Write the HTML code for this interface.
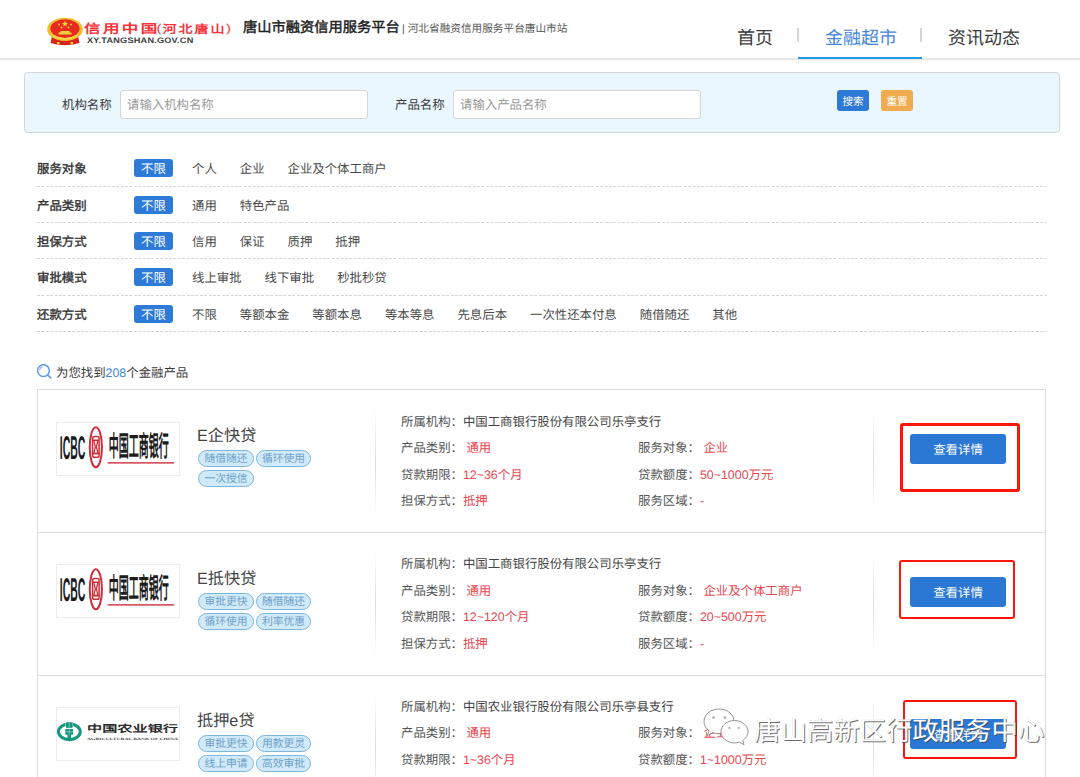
<!DOCTYPE html>
<html lang="zh-CN"><head><meta charset="utf-8">
<style>
*{margin:0;padding:0;box-sizing:border-box}
html,body{width:1080px;height:777px;overflow:hidden;background:#fff;font-family:"Liberation Sans",sans-serif;color:#333;text-rendering:geometricPrecision}
.a{position:absolute;white-space:nowrap}
#hdr{position:absolute;left:0;top:0;width:1080px;height:60px;border-bottom:2px solid #e6e6e6;background:#fff;box-shadow:0 1px 2px rgba(0,0,0,0.04)}
.nav{font-size:18px;color:#3a3a3a;line-height:20px}
.navsep{position:absolute;width:2px;height:14px;background:#d5d5d5}
#panel{position:absolute;left:24px;top:72px;width:1036px;height:61px;background:#eaf7fe;border:1px solid #d3d7da;border-radius:4px}
.lbl{font-size:12.4px;color:#3a3a3a;line-height:14px}
.inp{position:absolute;height:29px;background:#fff;border:1px solid #d6d6d6;border-radius:3px}
.ph{font-size:12.4px;color:#9a9a9a;line-height:14px}
.btn{position:absolute;height:21px;border-radius:3px;color:#fff;font-size:10.6px;font-weight:normal;text-align:center;line-height:25px}
.row{position:absolute;left:37px;width:1010px;height:1px;background:repeating-linear-gradient(90deg,#d6d6d6 0 3px,transparent 3px 4.4px)}
.flab{font-size:12.4px;font-weight:normal;color:#333;line-height:14px;-webkit-text-stroke:0.4px #333}
.badge{position:absolute;left:134px;width:39px;height:18px;background:#2d7ad7;border-radius:3px;color:#fff;font-size:12.4px;text-align:center;line-height:20px}
.opt{font-size:12.4px;color:#4a4a4a;line-height:14px}
.opt span{margin-left:23px}
#list{position:absolute;left:37px;top:389px;width:1009px;height:400px;border:1px solid #dcdcdc;border-bottom:none}
.logo{position:absolute;width:124px;height:54px;border:1px solid #ececec;background:#fff;overflow:hidden}
.logo svg{position:absolute;left:-1px;top:-1px}
.pname{position:absolute;font-size:16.2px;color:#444;line-height:18px;white-space:nowrap}
.tag{position:absolute;height:17px;width:56px;border:1px solid #7db6dc;background:#d0eafa;border-radius:9px;color:#6d9fc8;font-size:10.8px;line-height:16.5px;text-align:center;white-space:nowrap}
.vdiv{position:absolute;width:1px;background:linear-gradient(#fff,#e6e6e6 35%,#dcdcdc 50%,#e6e6e6 65%,#fff)}
.il{position:absolute;font-size:12.4px;color:#555;line-height:14px;white-space:nowrap}
.il b{font-weight:normal;color:#e8474f}
.dbtn{position:absolute;width:96px;height:30px;background:#2b78d4;border-radius:3px;color:#fff;font-size:12.4px;line-height:33px;text-align:center}
.redbox{position:absolute;border:2px solid #ff1608;border-radius:3px}
</style></head><body>

<div id="hdr">
  <svg class="a" style="left:46px;top:17px" width="38" height="29" viewBox="0 0 38 29">
    <path d="M6 19 Q19 26 32 19 L33.5 26 Q19 30.5 4.5 26Z" fill="#d8241b"/>
    <ellipse cx="19" cy="12.3" rx="17.8" ry="11.6" fill="#f2be30"/>
    <ellipse cx="19" cy="11.6" rx="14.6" ry="9.4" fill="#e52a20"/>
    <path d="M6.5 18.5 Q19 25.5 31.5 18.5" stroke="#f6d54a" stroke-width="2" fill="none"/>
    <path d="M12.5 17.5 h13 v-2 h-2 v-1.5 h-9 v1.5 h-2z" fill="#f5d23a"/>
    <path d="M19 3.6 l0.9 2.1 2.2 .2 -1.7 1.4 .5 2.2 -1.9-1.2 -1.9 1.2 .5-2.2 -1.7-1.4 2.2-.2z" fill="#f5d23a"/>
    <circle cx="13" cy="7.5" r="0.9" fill="#f5d23a"/><circle cx="25" cy="7.5" r="0.9" fill="#f5d23a"/>
    <circle cx="15.5" cy="10.5" r="0.9" fill="#f5d23a"/><circle cx="22.5" cy="10.5" r="0.9" fill="#f5d23a"/>
    <rect x="11" y="25" width="2.5" height="2.5" fill="#f5d23a"/><rect x="24.5" y="25" width="2.5" height="2.5" fill="#f5d23a"/>
  </svg>
  <div class="a" style="left:84px;top:22px;font-size:16.5px;line-height:18px;font-weight:bold;color:#f5343c;letter-spacing:2.4px;transform:scaleY(0.75);transform-origin:0 0">信用中国</div>
  <div class="a" style="left:156.5px;top:22px;font-size:15px;line-height:18px;font-weight:normal;color:#f5343c;transform:scaleY(0.76);transform-origin:0 0">(</div>
  <div class="a" style="left:162.5px;top:21.5px;font-size:14px;line-height:18px;font-weight:bold;color:#f5343c;letter-spacing:2px;transform:scaleY(0.8);transform-origin:0 0">河北唐山</div>
  <div class="a" style="left:226px;top:22px;font-size:15px;line-height:18px;font-weight:normal;color:#f5343c;transform:scaleY(0.76);transform-origin:0 0">)</div>
  <div class="a" style="left:87px;top:35.5px;font-size:8px;line-height:9px;font-weight:bold;color:#3a3a3a;letter-spacing:0.2px;transform:scaleX(1.14);transform-origin:0 0">XY.TANGSHAN.GOV.CN</div>
  <div class="a" style="left:243px;top:19.5px;font-size:14.25px;line-height:17px;font-weight:normal;color:#222;-webkit-text-stroke:0.45px #222">唐山市融资信用服务平台</div>
  <div class="a" style="left:402px;top:23px;font-size:10.65px;line-height:13px;color:#555">| 河北省融资信用服务平台唐山市站</div>

  <div class="a nav" style="left:737px;top:28px">首页</div>
  <div class="navsep" style="left:797px;top:28px"></div>
  <div class="a nav" style="left:825px;top:28px;color:#4585db">金融超市</div>
  <div class="a" style="left:798px;top:56.5px;width:124px;height:2px;background:#259be9"></div>
  <div class="navsep" style="left:920px;top:28px"></div>
  <div class="a nav" style="left:948px;top:28px">资讯动态</div>
</div>

<div id="panel"></div>
<div class="a lbl" style="left:62px;top:98px">机构名称</div>
<div class="inp" style="left:120px;top:90px;width:248px"></div>
<div class="a ph" style="left:127px;top:98px">请输入机构名称</div>
<div class="a lbl" style="left:395px;top:98px">产品名称</div>
<div class="inp" style="left:453px;top:90px;width:248px"></div>
<div class="a ph" style="left:460px;top:98px">请输入产品名称</div>
<div class="btn" style="left:837px;top:90px;width:32px;background:#2e78d6">搜索</div>
<div class="btn" style="left:881px;top:90px;width:32px;background:#f0ab4e">重置</div>

<div class="a flab" style="left:37px;top:162px">服务对象</div>
<div class="badge" style="top:159px">不限</div>
<div class="a opt" style="left:192px;top:162px">个人<span>企业</span><span>企业及个体工商户</span></div>
<div class="row" style="top:186px"></div>
<div class="a flab" style="left:37px;top:199px">产品类别</div>
<div class="badge" style="top:196px">不限</div>
<div class="a opt" style="left:192px;top:199px">通用<span>特色产品</span></div>
<div class="row" style="top:222px"></div>
<div class="a flab" style="left:37px;top:235px">担保方式</div>
<div class="badge" style="top:232px">不限</div>
<div class="a opt" style="left:192px;top:235px">信用<span>保证</span><span>质押</span><span>抵押</span></div>
<div class="row" style="top:258px"></div>
<div class="a flab" style="left:37px;top:271px">审批模式</div>
<div class="badge" style="top:268px">不限</div>
<div class="a opt" style="left:192px;top:271px">线上审批<span>线下审批</span><span>秒批秒贷</span></div>
<div class="row" style="top:295px"></div>
<div class="a flab" style="left:37px;top:307.5px">还款方式</div>
<div class="badge" style="top:304.5px">不限</div>
<div class="a opt" style="left:192px;top:307.5px">不限<span>等额本金</span><span>等额本息</span><span>等本等息</span><span>先息后本</span><span>一次性还本付息</span><span>随借随还</span><span>其他</span></div>
<div class="row" style="top:331px"></div>
<svg class="a" style="left:32px;top:358px" width="30" height="26" viewBox="0 0 30 26">
  <circle cx="11.5" cy="12.6" r="5.9" stroke="#5d9be6" stroke-width="1.5" fill="none"/>
  <path d="M7.6 12.2 A4 4 0 0 1 10.6 8.9" stroke="#8bb9ee" stroke-width="1.1" fill="none"/>
  <path d="M15.9 17.1 L18.8 20" stroke="#5d9be6" stroke-width="1.7" stroke-linecap="round"/>
</svg>
<div class="a lbl" style="left:56px;top:366px">为您找到<span style="color:#3d84d8">208</span>个金融产品</div>
<div id="list"></div>
<div class="logo" style="left:56px;top:421.5px"><svg width="124" height="54" viewBox="0 0 124 54">
  <text x="3.8" y="36.5" font-family="Liberation Sans" font-weight="bold" font-size="33" fill="#1c1c1c" textLength="25.5" lengthAdjust="spacingAndGlyphs">ICBC</text>
  <ellipse cx="39.85" cy="25.2" rx="6.1" ry="20" fill="none" stroke="#d02c3a" stroke-width="2"/>
  <rect x="36.6" y="14.6" width="6.5" height="20.6" rx="1.8" fill="none" stroke="#d02c3a" stroke-width="1.5"/>
  <path d="M36.8 18.2 h6.1 M36.8 31.6 h6.1" stroke="#d02c3a" stroke-width="1.6" fill="none"/>
  <path d="M38 18.2 C38 22 39.3 23.2 39.3 24.9 C39.3 26.6 38 27.8 38 31.6 M41.7 18.2 C41.7 22 40.4 23.2 40.4 24.9 C40.4 26.6 41.7 27.8 41.7 31.6" stroke="#d02c3a" stroke-width="1.3" fill="none"/>
  <g transform="translate(52.7,34.3) scale(1,2.0)"><text x="0" y="0" font-weight="bold" font-size="14" fill="#1c1c1c" textLength="60" lengthAdjust="spacingAndGlyphs">中国工商银行</text></g>
  <rect x="51.6" y="40" width="66.5" height="1.7" fill="#d5565e"/>
</svg></div>
<div class="pname" style="left:197px;top:427.0px">E企快贷</div>
<div class="tag" style="left:198px;top:450.3px;width:56px">随借随还</div>
<div class="tag" style="left:256px;top:450.3px;width:55px">循环使用</div>
<div class="tag" style="left:198px;top:470.1px;width:56px">一次授信</div>
<div class="vdiv" style="left:375px;top:408.5px;height:106px"></div>
<div class="vdiv" style="left:873px;top:408.5px;height:104px"></div>
<div class="il" style="left:401px;top:414.5px">所属机构：<span style="color:#444">中国工商银行股份有限公司乐亭支行</span></div>
<div class="il" style="left:401px;top:441.1px">产品类别： <b>通用</b></div>
<div class="il" style="left:638px;top:441.1px">服务对象： <b>企业</b></div>
<div class="il" style="left:401px;top:467.7px">贷款期限：<b>12~36个月</b></div>
<div class="il" style="left:638px;top:467.7px">贷款额度：<b>50~1000万元</b></div>
<div class="il" style="left:401px;top:494.3px">担保方式：<b>抵押</b></div>
<div class="il" style="left:638px;top:494.3px">服务区域：<b>-</b></div>
<div class="dbtn" style="left:910px;top:434.3px">查看详情</div>
<div class="redbox" style="left:900px;top:423.0px;width:120.2px;height:68.7px;border-width:3px"></div>
<div class="a" style="left:38px;top:532.0px;width:1008px;height:1px;background:#dcdcdc"></div>
<div class="logo" style="left:56px;top:564.0px"><svg width="124" height="54" viewBox="0 0 124 54">
  <text x="3.8" y="36.5" font-family="Liberation Sans" font-weight="bold" font-size="33" fill="#1c1c1c" textLength="25.5" lengthAdjust="spacingAndGlyphs">ICBC</text>
  <ellipse cx="39.85" cy="25.2" rx="6.1" ry="20" fill="none" stroke="#d02c3a" stroke-width="2"/>
  <rect x="36.6" y="14.6" width="6.5" height="20.6" rx="1.8" fill="none" stroke="#d02c3a" stroke-width="1.5"/>
  <path d="M36.8 18.2 h6.1 M36.8 31.6 h6.1" stroke="#d02c3a" stroke-width="1.6" fill="none"/>
  <path d="M38 18.2 C38 22 39.3 23.2 39.3 24.9 C39.3 26.6 38 27.8 38 31.6 M41.7 18.2 C41.7 22 40.4 23.2 40.4 24.9 C40.4 26.6 41.7 27.8 41.7 31.6" stroke="#d02c3a" stroke-width="1.3" fill="none"/>
  <g transform="translate(52.7,34.3) scale(1,2.0)"><text x="0" y="0" font-weight="bold" font-size="14" fill="#1c1c1c" textLength="60" lengthAdjust="spacingAndGlyphs">中国工商银行</text></g>
  <rect x="51.6" y="40" width="66.5" height="1.7" fill="#d5565e"/>
</svg></div>
<div class="pname" style="left:197px;top:569.5px">E抵快贷</div>
<div class="tag" style="left:198px;top:592.8px;width:56px">审批更快</div>
<div class="tag" style="left:256px;top:592.8px;width:55px">随借随还</div>
<div class="tag" style="left:198px;top:612.6px;width:56px">循环使用</div>
<div class="tag" style="left:256px;top:612.6px;width:55px">利率优惠</div>
<div class="vdiv" style="left:375px;top:551.0px;height:106px"></div>
<div class="vdiv" style="left:873px;top:551.0px;height:104px"></div>
<div class="il" style="left:401px;top:557.0px">所属机构：<span style="color:#444">中国工商银行股份有限公司乐亭支行</span></div>
<div class="il" style="left:401px;top:583.6px">产品类别： <b>通用</b></div>
<div class="il" style="left:638px;top:583.6px">服务对象： <b>企业及个体工商户</b></div>
<div class="il" style="left:401px;top:610.2px">贷款期限：<b>12~120个月</b></div>
<div class="il" style="left:638px;top:610.2px">贷款额度：<b>20~500万元</b></div>
<div class="il" style="left:401px;top:636.8px">担保方式：<b>抵押</b></div>
<div class="il" style="left:638px;top:636.8px">服务区域：<b>-</b></div>
<div class="dbtn" style="left:910px;top:576.8px">查看详情</div>
<div class="redbox" style="left:899.3px;top:560.1px;width:115.8px;height:58.9px;border-width:2px"></div>
<div class="a" style="left:38px;top:674.5px;width:1008px;height:1px;background:#dcdcdc"></div>
<div class="logo" style="left:56px;top:706.5px"><svg width="124" height="54" viewBox="0 0 124 54">
  <ellipse cx="13.35" cy="24.75" rx="10.9" ry="7.9" fill="none" stroke="#14987f" stroke-width="3.1"/>
  <rect x="9.4" y="14.5" width="7.7" height="6" fill="#fff"/>
  <g fill="#14987f">
   <rect x="9.8" y="15.3" width="6.9" height="5.6" rx="0.6"/>
   <rect x="9.3" y="21.8" width="7.8" height="5.9" rx="0.8"/>
   <rect x="11.5" y="27" width="3.5" height="6.5"/>
  </g>
  <path d="M13.25 15.3 v5.2 M13.25 21.5 v6 M9.3 24.7 h7.8" stroke="#7cc6b6" stroke-width="0.9"/>
  <path d="M9.3 21.3 h7.8" stroke="#fff" stroke-width="0.8"/>
  <g transform="translate(31,25) scale(1,0.75)"><text x="0" y="0" font-family="Liberation Serif, serif" font-weight="900" font-size="13" fill="#2a2a2a" textLength="91" lengthAdjust="spacingAndGlyphs">中国农业银行</text></g>
  <text x="31" y="33.4" font-family="Liberation Serif" font-weight="bold" font-size="3.6" fill="#444" textLength="91" lengthAdjust="spacingAndGlyphs">AGRICULTURAL BANK OF CHINA</text>
</svg></div>
<div class="pname" style="left:197px;top:712.0px">抵押e贷</div>
<div class="tag" style="left:198px;top:735.3px;width:56px">审批更快</div>
<div class="tag" style="left:256px;top:735.3px;width:55px">用款更灵</div>
<div class="tag" style="left:198px;top:755.1px;width:56px">线上申请</div>
<div class="tag" style="left:256px;top:755.1px;width:55px">高效审批</div>
<div class="vdiv" style="left:375px;top:693.5px;height:106px"></div>
<div class="vdiv" style="left:873px;top:693.5px;height:104px"></div>
<div class="il" style="left:401px;top:699.5px">所属机构：<span style="color:#444">中国农业银行股份有限公司乐亭县支行</span></div>
<div class="il" style="left:401px;top:726.1px">产品类别： <b>通用</b></div>
<div class="il" style="left:638px;top:726.1px">服务对象： <b>企业</b></div>
<div class="il" style="left:401px;top:752.7px">贷款期限：<b>1~36个月</b></div>
<div class="il" style="left:638px;top:752.7px">贷款额度：<b>1~1000万元</b></div>
<div class="il" style="left:401px;top:779.3px">担保方式：<b>抵押</b></div>
<div class="il" style="left:638px;top:779.3px">服务区域：<b>-</b></div>
<div class="dbtn" style="left:910px;top:719.3px">查看详情</div>
<div class="redbox" style="left:903px;top:700.1px;width:113.8px;height:59.3px;border-width:2px"></div>
<svg class="a" style="left:700px;top:704px" width="52" height="46" viewBox="0 0 52 46">
  <g stroke="#8a8a8a" stroke-width="1" fill="#fff" opacity="0.9">
   <path d="M19 5 C10.5 5 4 10.5 4 17.5 C4 21.5 6 24.5 9 26.8 L7.5 31.5 L12.8 28.6 C14.8 29.3 16.8 29.7 19 29.7 C27.5 29.7 34 24.2 34 17.5 C34 10.5 27.5 5 19 5Z"/>
   <path d="M34.5 16.5 C27 16.5 21 21.5 21 27.7 C21 33.9 27 38.9 34.5 38.9 C36.2 38.9 37.8 38.6 39.3 38.1 L44 40.8 L42.8 36.6 C45.8 34.5 48 31.3 48 27.7 C48 21.5 42 16.5 34.5 16.5Z"/>
  </g>
  <g fill="#aaa"><circle cx="13.5" cy="13.5" r="1.3"/><circle cx="25" cy="13.5" r="1.3"/><circle cx="29.5" cy="24" r="1.1"/><circle cx="38.8" cy="24" r="1.1"/></g>
</svg>
<div class="a" style="left:754px;top:715.5px;font-size:26.4px;line-height:30px;color:#fff;text-shadow:1px 1px 0.6px rgba(60,60,60,.75),0 0 0.6px rgba(60,60,60,.35)">唐山高新区行政服务中心</div>
</body></html>
